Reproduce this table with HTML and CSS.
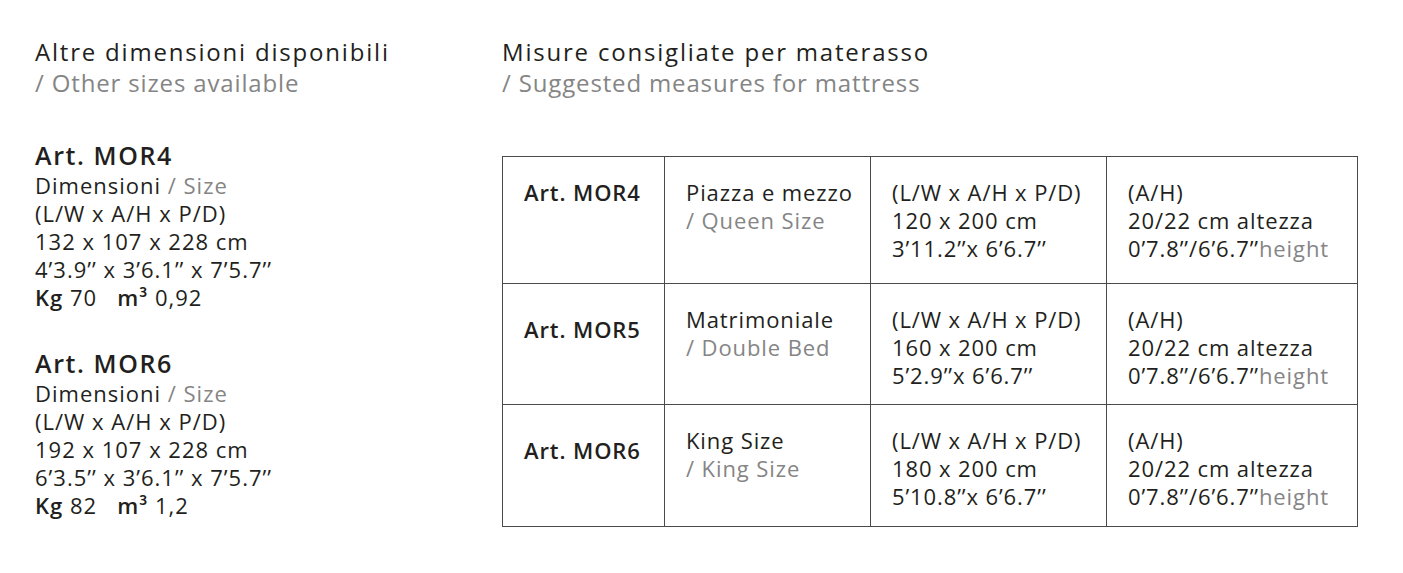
FILE: index.html
```html
<!DOCTYPE html>
<html lang="it">
<head>
<meta charset="utf-8">
<title>Misure</title>
<link rel="stylesheet" href="styles.css">
</head>
<body>
<div class="page">
  <section class="left">
    <h2 class="heading">Altre dimensioni disponibili<br><span class="sub">/ Other sizes available</span></h2>
    <div class="art">
      <div class="art-name">Art. MOR4</div>
      <div class="line">Dimensioni <span class="en">/ Size</span></div>
      <div class="line">(L/W x A/H x P/D)</div>
      <div class="line">132 x 107 x 228 cm</div>
      <div class="line">4’3.9’’ x 3’6.1’’ x 7’5.7’’</div>
      <div class="line"><b>Kg</b> 70 &nbsp; <b>m³</b> 0,92</div>
    </div>
    <div class="art">
      <div class="art-name">Art. MOR6</div>
      <div class="line">Dimensioni <span class="en">/ Size</span></div>
      <div class="line">(L/W x A/H x P/D)</div>
      <div class="line">192 x 107 x 228 cm</div>
      <div class="line">6’3.5’’ x 3’6.1’’ x 7’5.7’’</div>
      <div class="line"><b>Kg</b> 82 &nbsp; <b>m³</b> 1,2</div>
    </div>
  </section>
  <section class="right">
    <h2 class="heading">Misure consigliate per materasso<br><span class="sub">/ Suggested measures for mattress</span></h2>
    <table class="sizes">
      <colgroup>
        <col class="c1"><col class="c2"><col class="c3"><col class="c4">
      </colgroup>
      <tr class="r1">
        <td class="art-cell first">Art. MOR4</td>
        <td>Piazza e mezzo<br><span class="en">/ Queen Size</span></td>
        <td>(L/W x A/H x P/D)<br>120 x 200 cm<br>3’11.2’’x 6’6.7’’</td>
        <td>(A/H)<br>20/22 cm altezza<br>0’7.8’’/6’6.7’’<span class="en">height</span></td>
      </tr>
      <tr class="r2">
        <td class="art-cell">Art. MOR5</td>
        <td>Matrimoniale<br><span class="en">/ Double Bed</span></td>
        <td>(L/W x A/H x P/D)<br>160 x 200 cm<br>5’2.9’’x 6’6.7’’</td>
        <td>(A/H)<br>20/22 cm altezza<br>0’7.8’’/6’6.7’’<span class="en">height</span></td>
      </tr>
      <tr class="r3">
        <td class="art-cell">Art. MOR6</td>
        <td>King Size<br><span class="en">/ King Size</span></td>
        <td>(L/W x A/H x P/D)<br>180 x 200 cm<br>5’10.8’’x 6’6.7’’</td>
        <td>(A/H)<br>20/22 cm altezza<br>0’7.8’’/6’6.7’’<span class="en">height</span></td>
      </tr>
    </table>
  </section>
</div>
</body>
</html>
```
FILE: styles.css
```css
html, body {
  margin: 0;
  padding: 0;
  background: #ffffff;
}
body {
  font-family: "Open Sans", "Noto Sans", sans-serif;
  color: #231f20;
}
.page {
  display: flex;
  padding: 36px 0 0 35px;
}
.left {
  width: 467px;
}
.right {
  width: 855px;
}
.heading {
  margin: 0;
  font-weight: 400;
  font-size: 24px;
  line-height: 31px;
  letter-spacing: 1.8px;
}
.sub {
  color: #858585;
  letter-spacing: 0.85px;
}
.en {
  color: #858585;
}
.art {
  margin-top: 41px;
}
.art + .art {
  margin-top: 36px;
}
.art-name {
  font-size: 25px;
  line-height: 32px;
  font-weight: 600;
  letter-spacing: 1.6px;
}
.line {
  font-size: 22px;
  line-height: 28px;
  letter-spacing: 1px;
}
.line b {
  font-weight: 600;
}
.sizes {
  margin-top: 58px;
  width: 855px;
  border-collapse: collapse;
  table-layout: fixed;
  font-size: 22px;
  line-height: 28px;
  letter-spacing: 0.9px;
}
.c1 { width: 162px; }
.c2 { width: 206px; }
.c3 { width: 236px; }
.c4 { width: 251px; }
.sizes td {
  border: 1.5px solid #4a4a4a;
  vertical-align: top;
  padding: 21px 6px 0 21px;
}
.r1 { height: 127px; }
.r2 { height: 121px; }
.r3 { height: 122px; }
.sizes td.art-cell {
  font-weight: 600;
  padding-top: 31px;
}
.sizes td.art-cell.first {
  padding-top: 21px;
}
```
